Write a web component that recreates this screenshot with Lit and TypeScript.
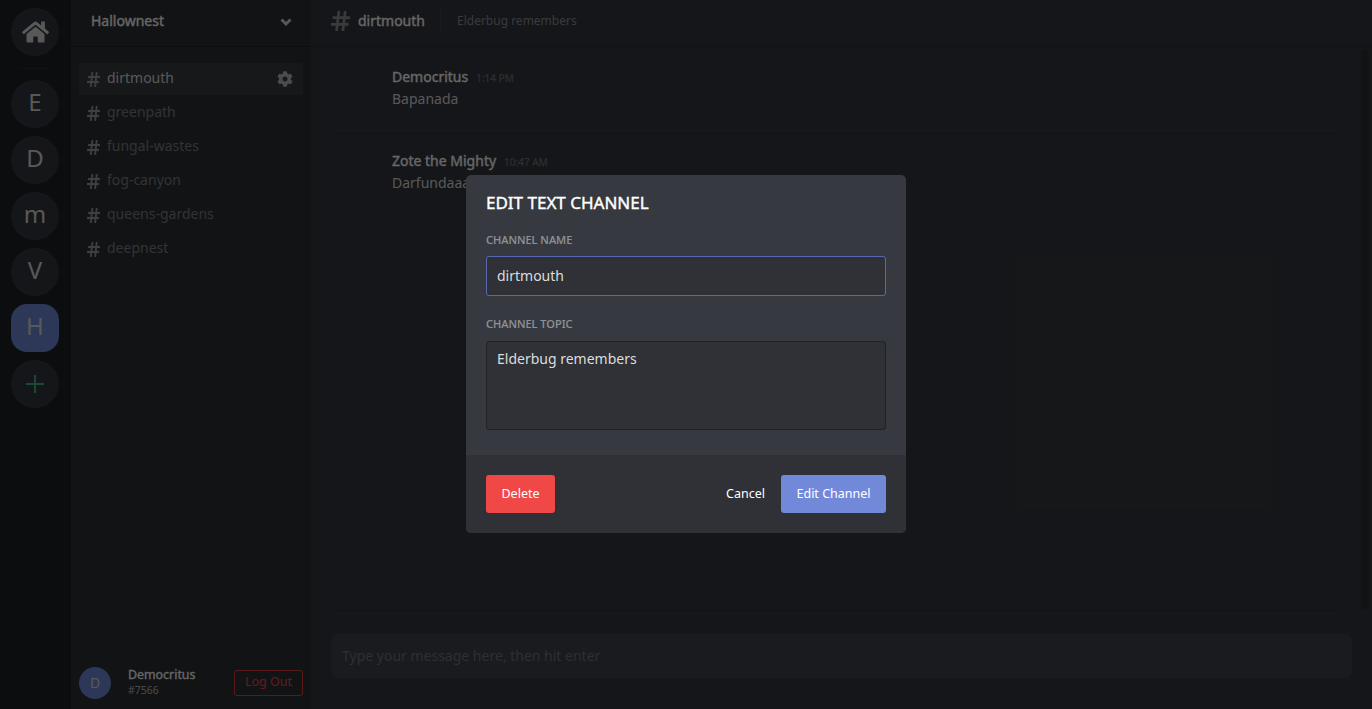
import { LitElement, html, css } from "lit";
import { customElement } from "lit/decorators.js";

const hash = (cls: string) => html`<svg class=${cls} viewBox="0 0 24 24" preserveAspectRatio="none" fill="none" stroke="currentColor" stroke-width="3.4" stroke-linecap="butt"><line x1="2" y1="8" x2="24" y2="8"></line><line x1="0" y1="16" x2="22" y2="16"></line><line x1="10" y1="0" x2="7" y2="24"></line><line x1="18" y1="0" x2="15" y2="24"></line></svg>`;

const channels = ["dirtmouth", "greenpath", "fungal-wastes", "fog-canyon", "queens-gardens", "deepnest"];
const servers = ["E", "D", "m", "V", "H"];
const messages = [
  { name: "Democritus", time: "1:14 PM", text: "Bapanada" },
  { name: "Zote the Mighty", time: "10:47 AM", text: "Darfundaaaa" },
];

@customElement("app-root")
export class AppRoot extends LitElement {
  static styles = css`
    :host { display: block; width: 100%; height: 100vh; overflow: hidden; position: relative; font-family: "Noto Sans", sans-serif; color: #dcddde; }
    * { box-sizing: border-box; }
    .app { display: flex; height: 100%; background: #36393f; }
    .rail { width: 71px; flex: none; background: #202225; display: flex; flex-direction: column; align-items: center; padding: 8px 1px 0 0; }
    .srv { width: 48px; height: 48px; border-radius: 50%; background: #36393f; display: flex; align-items: center; justify-content: center; font-size: 24px; padding-bottom: 5px; color: #dcddde; margin-bottom: 8px; flex: none; }
    .srv.home { margin-bottom: 0; padding-bottom: 0; }
    .srv.home svg { width: 27px; height: 24px; fill: #dcddde; }
    .srv.active { background: #7289da; border-radius: 16px; color: #dcddde; }
    .srv.add { padding-bottom: 0; }
    .srv.add svg { width: 20px; height: 20px; stroke: #43b581; stroke-width: 2; }
    .sep { width: 32px; height: 1px; background: #2b2d32; margin: 12px 0 11px; flex: none; }
    .side { width: 240px; flex: none; background: #2f3136; display: flex; flex-direction: column; }
    .side-head { height: 47px; flex: none; border-bottom: 1px solid #202225; display: flex; align-items: center; justify-content: space-between; padding: 0 20px 6px; font-size: 14px; color: #fff; -webkit-text-stroke: 0.35px currentColor; }
    .side-head svg { width: 12px; height: 12px; stroke: #dcddde; stroke-width: 3; fill: none; margin: 3px -1px 0 0; }
    .list { flex: 1; padding: 16px 8px 0; display: flex; flex-direction: column; gap: 2px; }
    .chan { height: 32px; display: flex; align-items: center; padding: 0 8px; border-radius: 3px; font-size: 14px; color: #7c8087; gap: 7px; }
    .chan.on { background: #393c43; color: #dcddde; }
    .chan .h { width: 13px; height: 15px; flex: none; color: #9a9ea4; }
    .chan .cog { width: 16px; height: 16px; margin: -1px 2px 0 auto; fill: #b9bbbe; }
    .chan span { position: relative; top: -2px; }
    .user { height: 52px; flex: none; display: flex; align-items: flex-start; padding: 10px 8px 0; }
    .avatar { width: 32px; height: 32px; border-radius: 50%; background: #7289da; display: flex; align-items: center; justify-content: center; font-size: 14px; padding-bottom: 2px; flex: none; color: #dcddde; }
    .who { margin-left: 17px; display: flex; flex-direction: column; flex: 1; margin-top: -1px; }
    .who b { font-size: 12.4px; font-weight: 400; -webkit-text-stroke: 0.3px currentColor; color: #fff; line-height: 18px; }
    .who small { font-size: 10.5px; color: #b9bbbe; line-height: 12px; }
    .logout { width: 69px; height: 26px; margin-top: 3px; border: 1px solid #e04343; border-radius: 3px; color: #f04747; font-size: 12.5px; padding-bottom: 3px; display: flex; align-items: center; justify-content: center; }
    .main { flex: 1; display: flex; flex-direction: column; min-width: 0; }
    .main-head { height: 47px; flex: none; border-bottom: 1px solid #2b2d32; display: flex; align-items: center; padding: 0 0 6px 20px; }
    .main-head .h { width: 19px; height: 20px; color: #8e9297; flex: none; margin-top: 2px; }
    .main-head b { font-size: 14px; font-weight: 400; -webkit-text-stroke: 0.35px currentColor; color: #fff; margin-left: 8px; }
    .vr { width: 1px; height: 24px; background: #42454a; margin: 0 16px 0 15px; }
    .topic { font-size: 12px; color: #8e9297; }
    .body { flex: 1; display: flex; min-height: 0; padding-right: 3px; }
    .msgs { flex: 1; padding: 0 24px; display: flex; flex-direction: column; min-width: 0; }
    .msg { height: 84px; padding: 20px 0 0 57px; border-bottom: 1px solid #3f4248; flex: none; }
    .msg:last-child { border-bottom: 0; }
    .line { display: flex; align-items: baseline; gap: 8px; line-height: 20px; }
    .line b { font-size: 14px; font-weight: 400; -webkit-text-stroke: 0.35px currentColor; color: #fff; }
    .line i { font-style: normal; font-size: 10px; -webkit-text-stroke: 0.2px currentColor; color: #72767d; }
    .txt { font-size: 14px; line-height: 22px; color: #dcddde; }
    .bar { width: 8px; margin: 3px 0; background: #2f3136; border-radius: 4px; flex: none; }
    .foot { height: 96px; flex: none; padding: 0 20px; display: flex; flex-direction: column; }
    .rule { height: 1px; background: #3f4248; margin: 0 15px 0 4px; }
    .box { height: 44px; margin-top: 20px; background: #40444b; border-radius: 8px; padding: 0 11px 2px; display: flex; align-items: center; font-size: 14px; color: #72767d; }
    .scrim { position: absolute; inset: 0; background: rgba(0,0,0,0.6); }
    .modal { position: absolute; left: 466px; top: 175px; width: 440px; height: 358px; border-radius: 5px; overflow: hidden; background: #36393f; display: flex; flex-direction: column; }
    .content { flex: 1; padding: 16px 20px 0; }
    h2 { margin: 0; font-size: 17px; font-weight: 400; -webkit-text-stroke: 0.4px currentColor; color: #fff; line-height: 24px; }
    label { display: block; font-size: 11px; font-weight: 500; color: #8e9297; -webkit-text-stroke: 0.15px currentColor; line-height: 16px; }
    .l1 { margin-top: 17px; }
    .l2 { margin-top: 20px; }
    .field { margin-top: 9px; background: #2f3136; border: 1px solid #202225; border-radius: 3px; padding: 0 10px; font-size: 14px; color: #dcddde; }
    .field.in { height: 40px; margin-top: 8px; display: flex; align-items: center; padding-bottom: 2px; border-color: #5868b0; }
    .field.ta { height: 89px; padding-top: 6px; line-height: 22px; }
    .mfoot { height: 78px; flex: none; background: #2f3136; display: flex; align-items: center; padding: 0 20px; font-size: 12.5px; color: #fff; }
    .btn { height: 38px; display: flex; align-items: center; justify-content: center; border-radius: 3px; padding-bottom: 2px; }
    .del { width: 69px; background: #f04747; }
    .cancel { margin-left: auto; margin-right: 16px; }
    .edit { width: 105px; background: #7289da; }
  `;

  render() {
    return html`
      <div class="app">
        <nav class="rail">
          <div class="srv home"><svg viewBox="0 0 576 512"><path d="M280.37 148.26L96 300.11V464a16 16 0 0 0 16 16l112.06-.29a16 16 0 0 0 15.92-16V368a16 16 0 0 1 16-16h64a16 16 0 0 1 16 16v95.64a16 16 0 0 0 16 16.05L464 480a16 16 0 0 0 16-16V300L295.67 148.26a12.19 12.19 0 0 0-15.3 0zM571.6 251.47L488 182.56V44.05a12 12 0 0 0-12-12h-56a12 12 0 0 0-12 12v72.61L318.47 43a48 48 0 0 0-61 0L4.34 251.47a12 12 0 0 0-1.6 16.9l25.5 31A12 12 0 0 0 45.15 301l235.22-193.74a12.19 12.19 0 0 1 15.3 0L530.9 301a12 12 0 0 0 16.9-1.6l25.5-31a12 12 0 0 0-1.7-16.93z"></path></svg></div>
          <div class="sep"></div>
          ${servers.map((s) => html`<div class="srv ${s === "H" ? "active" : ""}">${s}</div>`)}
          <div class="srv add"><svg viewBox="0 0 20 20" fill="none"><path d="M10 1v18M1 10h18"></path></svg></div>
        </nav>
        <aside class="side">
          <div class="side-head">Hallownest
            <svg viewBox="0 0 12 12"><path d="M1.5 3.5L6 8l4.5-4.5"></path></svg>
          </div>
          <div class="list">
            ${channels.map((c, i) => html`<div class="chan ${i === 0 ? "on" : ""}">${hash("h")}<span>${c}</span>${i === 0 ? html`<svg class="cog" viewBox="0 0 512 512"><path d="M487.4 315.7l-42.6-24.6c4.3-23.2 4.3-47 0-70.2l42.6-24.6c4.9-2.8 7.1-8.6 5.5-14-11.1-35.6-30-67.8-54.7-94.6-3.8-4.1-10-5.1-14.8-2.3L380.8 110c-17.9-15.4-38.5-27.3-60.8-35.1V25.8c0-5.6-3.9-10.5-9.4-11.7-36.7-8.2-74.3-7.8-109.2 0-5.5 1.2-9.4 6.1-9.4 11.7V75c-22.2 7.9-42.8 19.8-60.8 35.1L88.7 85.5c-4.9-2.8-11-1.9-14.8 2.3-24.7 26.7-43.6 58.9-54.7 94.6-1.7 5.4.6 11.2 5.5 14L67.3 221c-4.3 23.2-4.3 47 0 70.2l-42.6 24.6c-4.9 2.8-7.1 8.6-5.5 14 11.1 35.6 30 67.8 54.7 94.6 3.8 4.1 10 5.1 14.8 2.3l42.6-24.6c17.9 15.4 38.5 27.3 60.8 35.1v49.2c0 5.6 3.9 10.5 9.4 11.7 36.7 8.2 74.3 7.8 109.2 0 5.5-1.2 9.4-6.1 9.4-11.7v-49.2c22.2-7.9 42.8-19.8 60.8-35.1l42.6 24.6c4.9 2.8 11 1.9 14.8-2.3 24.7-26.7 43.6-58.9 54.7-94.6 1.5-5.5-.7-11.3-5.6-14.1zM256 336c-44.1 0-80-35.9-80-80s35.9-80 80-80 80 35.9 80 80-35.9 80-80 80z"></path></svg>` : ""}</div>`)}
          </div>
          <div class="user">
            <div class="avatar">D</div>
            <div class="who"><b>Democritus</b><small>#7566</small></div>
            <div class="logout">Log Out</div>
          </div>
        </aside>
        <main class="main">
          <header class="main-head">${hash("h")}<b>dirtmouth</b><div class="vr"></div><div class="topic">Elderbug remembers</div></header>
          <div class="body">
            <div class="msgs">
              ${messages.map((m) => html`<div class="msg"><div class="line"><b>${m.name}</b><i>${m.time}</i></div><div class="txt">${m.text}</div></div>`)}
            </div>
            <div class="bar"></div>
          </div>
          <div class="foot">
            <div class="rule"></div>
            <div class="box">Type your message here, then hit enter</div>
          </div>
        </main>
      </div>
      <div class="scrim"></div>
      <section class="modal">
        <div class="content">
          <h2>EDIT TEXT CHANNEL</h2>
          <label class="l1">CHANNEL NAME</label>
          <div class="field in">dirtmouth</div>
          <label class="l2">CHANNEL TOPIC</label>
          <div class="field ta">Elderbug remembers</div>
        </div>
        <div class="mfoot">
          <div class="btn del">Delete</div>
          <div class="btn cancel">Cancel</div>
          <div class="btn edit">Edit Channel</div>
        </div>
      </section>
    `;
  }
}
